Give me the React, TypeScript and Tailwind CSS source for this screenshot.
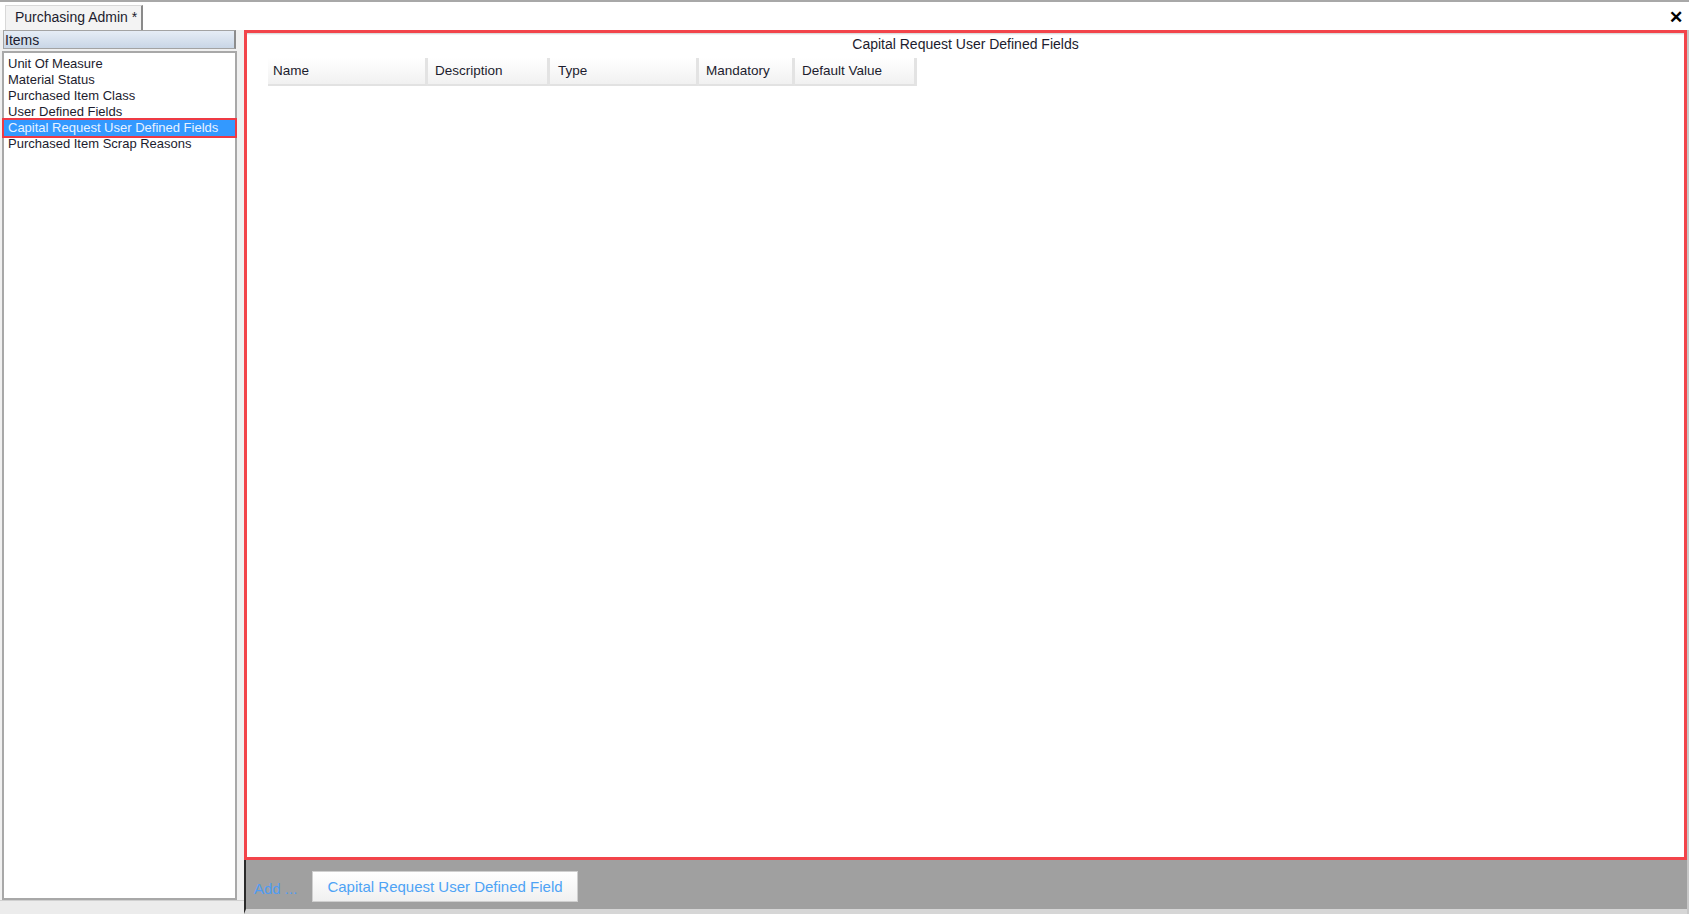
export default function App() {
  const items = [
    'Unit Of Measure',
    'Material Status',
    'Purchased Item Class',
    'User Defined Fields',
    'Capital Request User Defined Fields',
    'Purchased Item Scrap Reasons'
  ]
  const selected = 4

  const columns = [
    { label: 'Name', width: 'w-[160px]', pad: 'pl-[5px]' },
    { label: 'Description', width: 'w-[122px]', pad: 'pl-[7px]' },
    { label: 'Type', width: 'w-[149px]', pad: 'pl-[8px]' },
    { label: 'Mandatory', width: 'w-[96px]', pad: 'pl-[7px]' },
    { label: 'Default Value', width: 'w-[122px]', pad: 'pl-[7px]' }
  ]

  return (
    <div className="w-[1689px] h-[914px] flex flex-col bg-white overflow-hidden text-[#1c1c2e] font-['Liberation_Sans',Arial,sans-serif]">
      {/* tab strip */}
      <div className="h-[30px] flex items-end border-t-2 border-[#a8a8a8] relative">
        <div className="ml-[5px] h-[25px] w-[138px] flex items-center pl-[9px] pb-[2px] bg-[#f3f3f3] border-l border-t border-[#d8d8d8] border-r-2 border-r-[#8a8a8a] text-[14px] leading-none">
          Purchasing Admin *
        </div>
        <div className="absolute right-[6px] top-[7px] text-[17px] font-bold leading-none text-black">✕</div>
      </div>

      {/* body */}
      <div className="flex-1 flex">
        {/* left panel */}
        <div className="w-[244px] flex flex-col bg-[#f0f0f0]">
          <div className="ml-[3px] w-[233px] h-[19px] flex items-center pl-[1px] text-[14px] leading-none border border-[#a3a3a3] border-r-2 border-r-[#8c8c8c] bg-gradient-to-b from-[#e6edf6] to-[#c9d6e6]">
            Items
          </div>
          <div className="mt-[2px] ml-[2px] w-[235px] h-[849px] bg-white border-2 border-[#a8a8a8] pt-[3px] text-[13px] leading-4">
            {items.map((it, i) =>
              i === selected ? (
                <div key={i} className="h-4 pl-[4px] bg-[#3399ff] text-[#e8f2ff] outline-2 outline-[#ee3a44]">
                  {it}
                </div>
              ) : (
                <div key={i} className="h-4 pl-[4px]">
                  {it}
                </div>
              )
            )}
          </div>
          <div className="flex-1 bg-[#ececec] border-t border-[#d0d0d0]" />
        </div>

        {/* right panel */}
        <div className="flex-1 flex flex-col border-r-2 border-[#c8c8c8]">
          <div className="h-[830px] border-[3px] border-[#f2444a] bg-white flex flex-col">
            <div className="h-[2px] bg-gradient-to-b from-[#d0d0d0] to-white" />
            <div className="h-[17px] flex items-center justify-center text-[14px] leading-none">
              Capital Request User Defined Fields
            </div>
            <div className="mt-[6px] ml-[21px] flex h-[28px] text-[13.5px] leading-none">
              {columns.map((c) => (
                <div
                  key={c.label}
                  className={`${c.width} ${c.pad} h-full flex items-center bg-gradient-to-b from-white to-[#f1f1f1] border-r-[3px] border-r-[#e3e3e3] border-b-2 border-b-[#e2e2e2]`}
                >
                  {c.label}
                </div>
              ))}
            </div>
          </div>
          <div className="flex-1 flex items-start bg-[#a0a0a0] border-l-2 border-[#2a2a2a] border-b-[5px] border-b-[#d6d6d6]">
            <div className="mt-[21px] ml-[8px] w-[58px] text-[15px] leading-none text-[#4f9cf2]">Add ...</div>
            <div className="mt-[11px] h-[31px] w-[266px] flex items-center justify-center bg-gradient-to-b from-white to-[#f0f0f0] border border-[#cfcfcf] text-[15px] leading-none text-[#4ea3f5]">
              Capital Request User Defined Field
            </div>
          </div>
        </div>
      </div>
    </div>
  )
}
